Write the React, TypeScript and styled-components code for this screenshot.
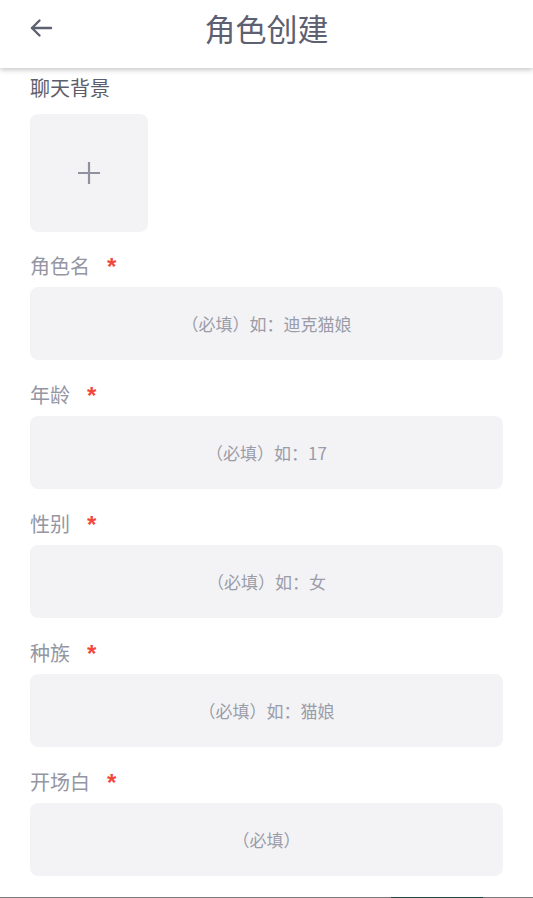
import React from "react";
import styled, { createGlobalStyle } from "styled-components";

const Global = createGlobalStyle`
  html, body { margin: 0; padding: 0; background: #ffffff; }
  body { font-family: "Noto Sans CJK SC", "Noto Sans", sans-serif; }
  * { box-sizing: border-box; }
`;

const Page = styled.div`
  width: 533px;
  min-height: 898px;
  display: flex;
  flex-direction: column;
  background: #ffffff;
`;

const Header = styled.header`
  height: 68px;
  display: grid;
  grid-template-columns: 68px 1fr 68px;
  align-items: center;
  background: #ffffff;
  box-shadow: 0 2px 5px rgba(0, 0, 0, 0.22);
  position: relative;
  z-index: 1;
`;

const BackButton = styled.button`
  border: none;
  background: transparent;
  padding: 0 0 0 29px;
  height: 56px;
  display: flex;
  align-items: center;
  color: #5d6070;
  cursor: pointer;
  margin-top: -12px;
`;

const Title = styled.h1`
  margin: -12px 0 0;
  text-align: center;
  font-size: 31px;
  font-weight: 400;
  color: #5d6070;
  line-height: 40px;
`;

const Content = styled.main`
  flex: 1;
  padding: 6px 30px 0;
  display: flex;
  flex-direction: column;
`;

const Label = styled.div<{ $strong?: boolean; $gap: number }>`
  height: 28px;
  line-height: 28px;
  font-size: 20px;
  color: ${(p) => (p.$strong ? "#5c5e6b" : "#9496a3")};
  margin-bottom: ${(p) => p.$gap}px;
  display: flex;
  align-items: center;
`;

const Star = styled.span`
  color: #f2473c;
  font-family: "Liberation Sans", sans-serif;
  font-size: 24px;
  font-weight: 700;
  margin-left: 17px;
  line-height: 1;
  margin-top: 2px;
`;

const Upload = styled.button`
  width: 118px;
  height: 118px;
  border: none;
  border-radius: 8px;
  background: #f3f3f6;
  display: flex;
  align-items: center;
  justify-content: center;
  margin-bottom: 20px;
  padding: 0;
  cursor: pointer;
`;

const Field = styled.input`
  width: 473px;
  height: 73px;
  border: none;
  border-radius: 8px;
  background: #f3f3f6;
  text-align: center;
  font-family: "Noto Sans CJK SC", "Noto Sans", sans-serif;
  font-size: 17px;
  color: #5c5e6b;
  outline: none;
  margin-bottom: 21px;
  &::placeholder { color: #9a9ca8; }
`;

const BottomEdge = styled.div`
  height: 1px;
  display: grid;
  grid-template-columns: 391px 92px 1fr;
`;

const EdgePart = styled.div<{ $c: string }>`
  background: ${(p) => p.$c};
`;

const fields = [
  { label: "角色名", ph: "（必填）如：迪克猫娘" },
  { label: "年龄", ph: "（必填）如：17" },
  { label: "性别", ph: "（必填）如：女" },
  { label: "种族", ph: "（必填）如：猫娘" },
  { label: "开场白", ph: "（必填）" },
];

export default function App() {
  return (
    <Page>
      <Global />
      <Header>
        <BackButton aria-label="返回">
          <svg width="24" height="20" viewBox="0 0 24 20" fill="none" stroke="currentColor" strokeWidth="2.4" strokeLinecap="round" strokeLinejoin="round">
            <path d="M22 10H3" />
            <path d="M10.5 2.5L3 10l7.5 7.5" />
          </svg>
        </BackButton>
        <Title>角色创建</Title>
        <div />
      </Header>
      <Content>
        <Label $strong $gap={12}>聊天背景</Label>
        <Upload aria-label="上传背景">
          <svg width="22" height="22" viewBox="0 0 22 22" stroke="#8f919d" strokeWidth="2.2">
            <path d="M11 0v22M0 11h22" />
          </svg>
        </Upload>
        {fields.map((f) => (
          <React.Fragment key={f.label}>
            <Label $gap={7}>
              {f.label}
              <Star>*</Star>
            </Label>
            <Field placeholder={f.ph} />
          </React.Fragment>
        ))}
      </Content>
      <BottomEdge>
        <EdgePart $c="#7a7a7a" />
        <EdgePart $c="#1f4a40" />
        <EdgePart $c="#7a7a7a" />
      </BottomEdge>
    </Page>
  );
}
